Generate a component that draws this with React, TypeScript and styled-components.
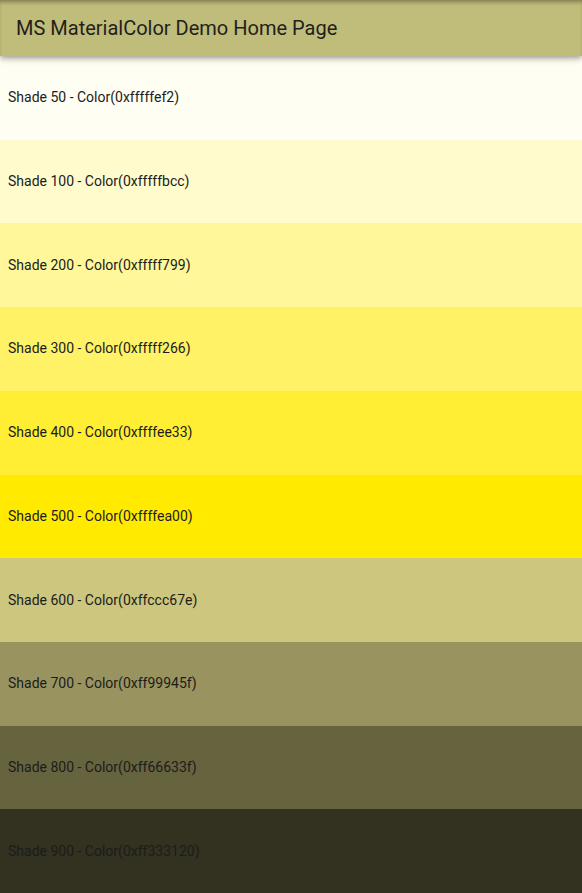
import React from "react";
import styled, { createGlobalStyle } from "styled-components";

const Global = createGlobalStyle`
  html, body { margin: 0; padding: 0; }
  body { font-family: Roboto, "Noto Sans", sans-serif; background: #fafafa; }
`;

const Page = styled.div`
  height: 893px;
  display: flex;
  flex-direction: column;
  overflow: hidden;
`;

const AppBar = styled.header`
  position: relative;
  z-index: 2;
  height: 56px;
  flex: 0 0 56px;
  display: flex;
  align-items: center;
  padding: 0 16px;
  background: #c0bc7a;
  box-shadow: 0 2px 4px -1px rgba(0,0,0,0.2), 0 4px 5px 0 rgba(0,0,0,0.14), 0 1px 10px 0 rgba(0,0,0,0.12),
    inset 0 4px 4px -2px rgba(0,0,0,0.35);
`;

const Title = styled.h1`
  margin: 0;
  font-family: Roboto, sans-serif;
  font-size: 20px;
  font-weight: 400;
  color: #1f1f1c;
`;

const List = styled.div`
  flex: 1;
  display: flex;
  flex-direction: column;
`;

const Row = styled.div<{ $bg: string }>`
  flex: 1;
  display: flex;
  align-items: center;
  padding: 0 8px 1px;
  background: ${(p) => p.$bg};
`;

const Label = styled.span`
  font-family: Roboto, sans-serif;
  font-size: 14px;
  color: #1c1c1c;
`;

const shades: [number, string][] = [
  [50, "fffef2"],
  [100, "fffbcc"],
  [200, "fff799"],
  [300, "fff266"],
  [400, "ffee33"],
  [500, "ffea00"],
  [600, "ccc67e"],
  [700, "99945f"],
  [800, "66633f"],
  [900, "333120"],
];

export default function App() {
  return (
    <Page>
      <Global />
      <AppBar>
        <Title>MS MaterialColor Demo Home Page</Title>
      </AppBar>
      <List>
        {shades.map(([n, hex]) => (
          <Row key={n} $bg={"#" + hex}>
            <Label>
              Shade {n} - Color(0xff{hex})
            </Label>
          </Row>
        ))}
      </List>
    </Page>
  );
}
